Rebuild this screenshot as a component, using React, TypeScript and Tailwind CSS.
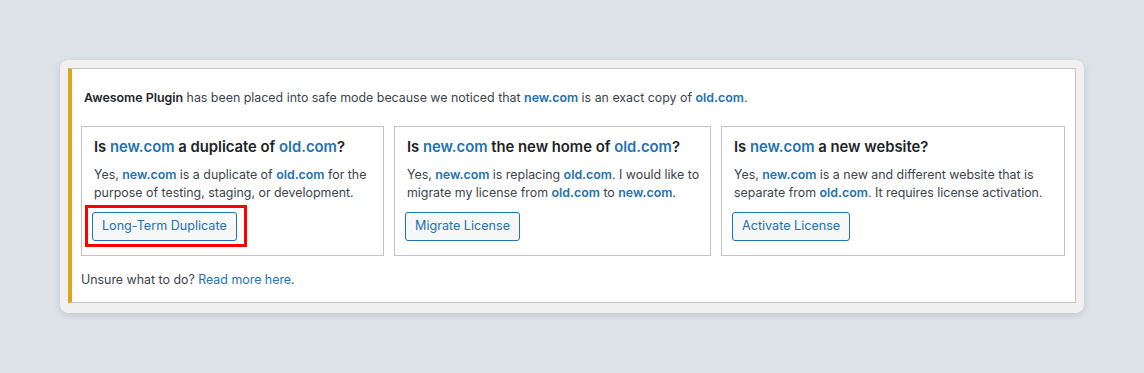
import React from "react";

const L = ({ children }: { children: React.ReactNode }) => (
  <span className="text-[#2271b1] font-semibold">{children}</span>
);
const H = ({ children }: { children: React.ReactNode }) => (
  <span className="text-[#2271b1]">{children}</span>
);

function Card({
  title,
  body,
  button,
  highlight,
}: {
  title: React.ReactNode;
  body: React.ReactNode;
  button: string;
  highlight?: boolean;
}) {
  return (
    <div className="border border-[#c3c4c7] bg-white pl-[12px] pr-[8px] pt-[10px] pb-[14px]">
      <h2 className="text-[14.8px] leading-[20px] font-semibold text-[#1d2327]">{title}</h2>
      <p className="mt-[9px] text-[12.4px] leading-[18px] text-[#3c434a]">{body}</p>
      <div className="mt-[10px] -ml-[2px] flex">
        <div className="relative">
          <button className="h-[29px] rounded-[3px] border border-[#2271b1] bg-[#f6f7f7] px-[9px] text-[12.6px] text-[#2271b1]">
            {button}
          </button>
          {highlight && (
            <div className="pointer-events-none absolute -left-[7px] -right-[10px] -top-[7px] -bottom-[6px] border-[3px] border-[#ff0000]" />
          )}
        </div>
      </div>
    </div>
  );
}

export default function App() {
  return (
    <div
      className="min-h-[373px] w-full bg-[#dde1e8] pl-[60px] pr-[60px] pt-[60px]"
      style={{ fontFamily: "Inter, 'Noto Sans', sans-serif" }}
    >
      <div className="rounded-[8px] bg-[#f0f0f1] p-[8px] pb-[10px] shadow-[0_2px_6px_rgba(0,0,0,0.12)]">
        <div className="border border-l-[4px] border-[#c3c4c7] border-l-[#dba617] bg-white px-[9px] pt-[20px] pb-[13px]">
          <p className="pl-[3px] text-[12.4px] leading-[18px] text-[#3c434a]">
            <span className="font-semibold text-[#1d2327]">Awesome Plugin</span> has been placed into safe
            mode because we noticed that <L>new.com</L> is an exact copy of <L>old.com</L>.
          </p>
          <div className="mt-[19px] grid grid-cols-[303px_317px_344px] gap-[10px]">
            <Card
              highlight
              title={
                <>
                  Is <H>new.com</H> a duplicate of <H>old.com</H>?
                </>
              }
              body={
                <>
                  Yes, <L>new.com</L> is a duplicate of <L>old.com</L> for the purpose of testing, staging, or
                  development.
                </>
              }
              button="Long-Term Duplicate"
            />
            <Card
              title={
                <>
                  Is <H>new.com</H> the new home of <H>old.com</H>?
                </>
              }
              body={
                <>
                  Yes, <L>new.com</L> is replacing <L>old.com</L>. I would like to migrate my license from{" "}
                  <L>old.com</L> to <L>new.com</L>.
                </>
              }
              button="Migrate License"
            />
            <Card
              title={
                <>
                  Is <H>new.com</H> a new website?
                </>
              }
              body={
                <>
                  Yes, <L>new.com</L> is a new and different website that is separate from <L>old.com</L>. It
                  requires license activation.
                </>
              }
              button="Activate License"
            />
          </div>
          <p className="mt-[15px] text-[12.4px] leading-[18px] text-[#3c434a]">
            Unsure what to do? <span className="text-[#2271b1]">Read more here</span>.
          </p>
        </div>
      </div>
    </div>
  );
}
